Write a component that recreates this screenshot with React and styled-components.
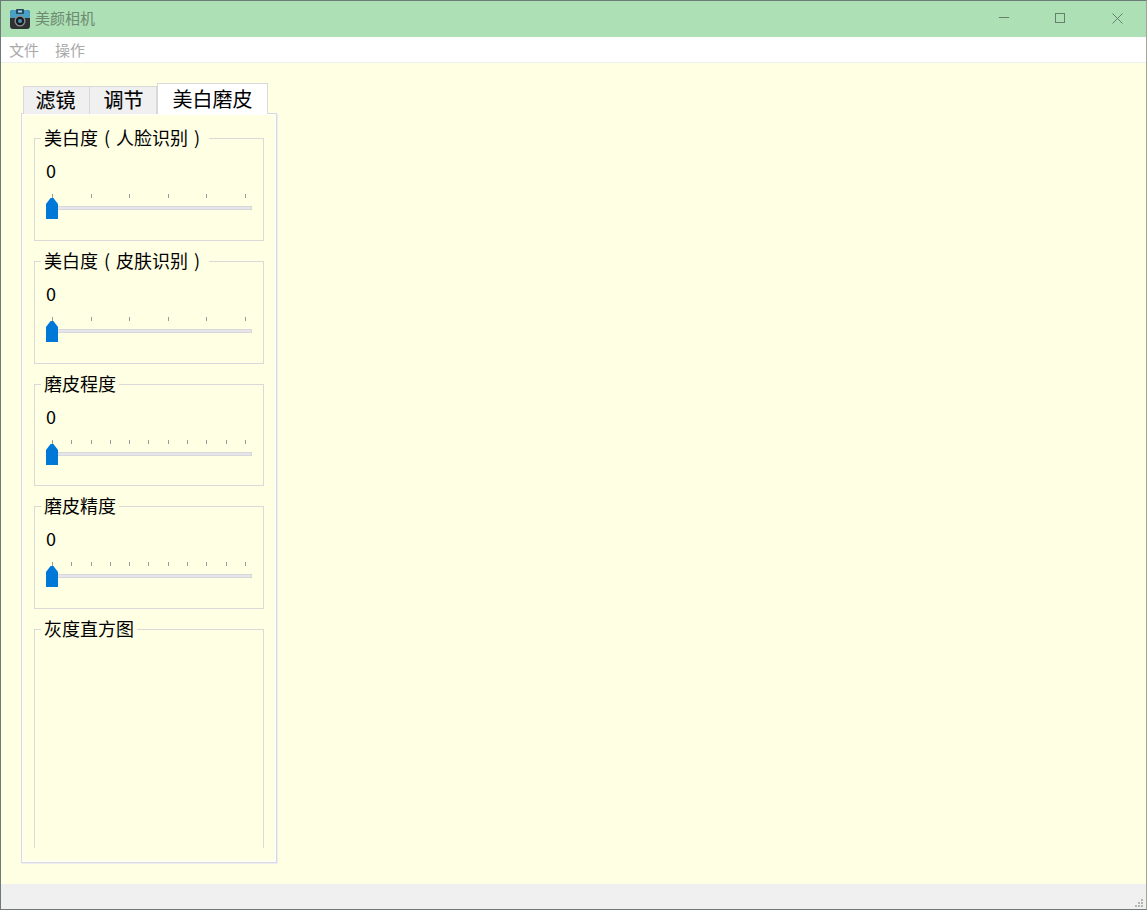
import styled, { createGlobalStyle } from 'styled-components';

const GlobalStyle = createGlobalStyle`
  html, body { margin: 0; padding: 0; background: #3b3f45; overflow: hidden; }
  * { box-sizing: border-box; }
`;

const Window = styled.div`
  width: 1147px;
  height: 910px;
  display: flex;
  flex-direction: column;
  border: 1px solid #6f7a78;
  border-right-color: #a3a596;
  font-family: "Noto Sans CJK SC", "Liberation Sans", sans-serif;
`;

const TitleBar = styled.div`
  height: 36px;
  flex: none;
  display: flex;
  align-items: center;
  background: #ade0b4;
  padding: 0 0 0 9px;
`;

const AppTitle = styled.span`
  margin-left: 5px;
  padding-bottom: 2px;
  font-size: 15px;
  line-height: 34px;
  color: #6d8a72;
`;

const WinControls = styled.div`
  margin-left: auto;
  display: flex;
  padding-right: 1px;
`;

const WinButton = styled.div`
  width: 57px;
  height: 36px;
  display: flex;
  align-items: center;
  justify-content: center;
  padding: 0 0 2px ${p => p.$nudge || 0}px;
  color: #66806b;
`;

const MenuBar = styled.div`
  height: 26px;
  flex: none;
  display: flex;
  align-items: center;
  gap: 16px;
  padding: 0 0 1px 8px;
  background: #fff;
  border-bottom: 1px solid #efefef;
`;

const MenuItem = styled.span`
  font-size: 15px;
  color: #a9a9a9;
`;

const Content = styled.div`
  flex: 1;
  background: #ffffe4;
  padding: 20px 20px;
`;

const TabBar = styled.div`
  display: flex;
  align-items: flex-end;
  margin-left: 2px;
  height: 31px;
  margin-bottom: -1px;
  position: relative;
  z-index: 1;
`;

const Tab = styled.div`
  width: ${p => p.$w}px;
  height: ${p => (p.$active ? 31 : 28)}px;
  display: flex;
  align-items: center;
  justify-content: center;
  padding: 0 ${p => (p.$first ? 2 : 0)}px ${p => (p.$active ? 0 : 2)}px ${p => (p.$first || p.$active ? 0 : 1)}px;
  font-size: 20px;
  font-weight: 400;
  -webkit-text-stroke: ${p => (p.$active ? 0 : 0.15)}px #000;
  line-height: 26px;
  color: #000;
  background: ${p => (p.$active ? '#fff' : '#f0f0f0')};
  border: 1px solid #d9d9d9;
  border-bottom: none;
  border-left: ${p => (p.$first || p.$active ? '1px solid #d9d9d9' : 'none')};
`;

const Pane = styled.div`
  width: 256px;
  height: 750px;
  display: flex;
  flex-direction: column;
  gap: 8px;
  padding: 12px;
  background: #ffffe4;
  border: 1px solid #d9d9e0;
  box-shadow: inset 0 0 0 1px #fff, 1px 1px 0 #eeeef0;
`;

const Group = styled.fieldset`
  margin: 0;
  min-width: 0;
  width: 230px;
  height: ${p => p.$h}px;
  padding: 0 11px;
  border: 1px solid #d9d9d9;
  border-bottom: ${p => (p.$open ? 'none' : '1px solid #d9d9d9')};
`;

const GroupLabel = styled.legend`
  margin-left: -5px;
  padding: 0 3px 2px;
  font-size: 18px;
  line-height: 22px;
  color: #000;
`;

// brackets sit centred in a full CJK cell
const Paren = styled.span`
  display: inline-block;
  width: 18px;
  text-align: center;
`;

const Value = styled.div`
  margin-top: 8px;
  font-size: 18px;
  line-height: 24px;
  color: #000;
`;

const Slider = styled.div`
  position: relative;
  height: 26px;
  margin-top: 11px;
`;

const Ticks = styled.div`
  display: flex;
  justify-content: space-between;
  padding: 0 6px;
  height: 5px;
`;

const Tick = styled.i`
  display: block;
  width: 1px;
  height: 4px;
  margin-top: 1px;
  background: #9a9a9a;
`;

const Track = styled.div`
  height: 4px;
  margin-top: 8px;
  background: #e6e6ea;
  border: 1px solid #d8d8dc;
`;

const Handle = styled.div`
  position: absolute;
  left: 0;
  top: 5px;
  width: 12px;
  height: 21px;
  background: #0078d7;
  clip-path: polygon(38% 0, 62% 0, 100% 28%, 100% 100%, 0 100%, 0 28%);
`;

const StatusBar = styled.div`
  height: 25px;
  flex: none;
  display: flex;
  justify-content: flex-end;
  align-items: flex-end;
  background: #f0f0f0;
  padding: 0 0 1px 0;
`;

const CameraIcon = () => (
  <svg width="20" height="20" viewBox="0 0 20 20">
    <rect x="0" y="1" width="20" height="19" rx="3" fill="#2f3133" />
    <path d="M0 9V4a3 3 0 0 1 3-3h14a3 3 0 0 1 3 3v5z" fill="#4a9fc4" />
    <rect x="6" y="0" width="8" height="5" rx="1" fill="#27475a" />
    <rect x="8" y="1.5" width="4" height="2" fill="#9ad6ec" />
    <circle cx="10" cy="12" r="5.5" fill="#8b8f91" />
    <circle cx="10" cy="12" r="4.2" fill="#1a1d1f" />
    <circle cx="10" cy="12" r="2" fill="#3f93b8" />
  </svg>
);

const MinIcon = () => (
  <svg width="10" height="10" viewBox="0 0 10 10">
    <path d="M0 4.5h10" stroke="currentColor" fill="none" />
  </svg>
);

const MaxIcon = () => (
  <svg width="10" height="10" viewBox="0 0 10 10">
    <rect x="0.5" y="0.5" width="9" height="9" stroke="currentColor" fill="none" />
  </svg>
);

const CloseIcon = () => (
  <svg width="11" height="11" viewBox="0 0 11 11">
    <path d="M0.5 0.5l10 10M10.5 0.5l-10 10" stroke="currentColor" fill="none" />
  </svg>
);

const Grip = () => (
  <svg width="11" height="11" viewBox="0 0 11 11">
    <g fill="#b4b4b4">
      <rect x="0" y="8" width="2" height="2" />
      <rect x="3" y="8" width="2" height="2" />
      <rect x="6" y="8" width="2" height="2" />
      <rect x="3" y="5" width="2" height="2" />
      <rect x="6" y="5" width="2" height="2" />
      <rect x="6" y="2" width="2" height="2" />
    </g>
  </svg>
);

const SliderGroup = ({ label, ticks, h }) => (
  <Group $h={h}>
    <GroupLabel>{label}</GroupLabel>
    <Value>0</Value>
    <Slider>
      <Ticks>
        {Array.from({ length: ticks }, (_, i) => <Tick key={i} />)}
      </Ticks>
      <Track />
      <Handle />
    </Slider>
  </Group>
);

export default function App() {
  return (
    <>
      <GlobalStyle />
      <Window>
        <TitleBar>
          <CameraIcon />
          <AppTitle>美颜相机</AppTitle>
          <WinControls>
            <WinButton $nudge={2}><MinIcon /></WinButton>
            <WinButton><MaxIcon /></WinButton>
            <WinButton $nudge={2}><CloseIcon /></WinButton>
          </WinControls>
        </TitleBar>
        <MenuBar>
          <MenuItem>文件</MenuItem>
          <MenuItem>操作</MenuItem>
        </MenuBar>
        <Content>
          <TabBar>
            <Tab $w={67} $first>滤镜</Tab>
            <Tab $w={67}>调节</Tab>
            <Tab $w={111} $active>美白磨皮</Tab>
          </TabBar>
          <Pane>
            <SliderGroup label={<>美白度<Paren>(</Paren>人脸识别<Paren>)</Paren></>} ticks={6} h={115} />
            <SliderGroup label={<>美白度<Paren>(</Paren>皮肤识别<Paren>)</Paren></>} ticks={6} h={115} />
            <SliderGroup label="磨皮程度" ticks={11} h={114} />
            <SliderGroup label="磨皮精度" ticks={11} h={115} />
            <Group $h={231} $open>
              <GroupLabel>灰度直方图</GroupLabel>
            </Group>
          </Pane>
        </Content>
        <StatusBar><Grip /></StatusBar>
      </Window>
    </>
  );
}
